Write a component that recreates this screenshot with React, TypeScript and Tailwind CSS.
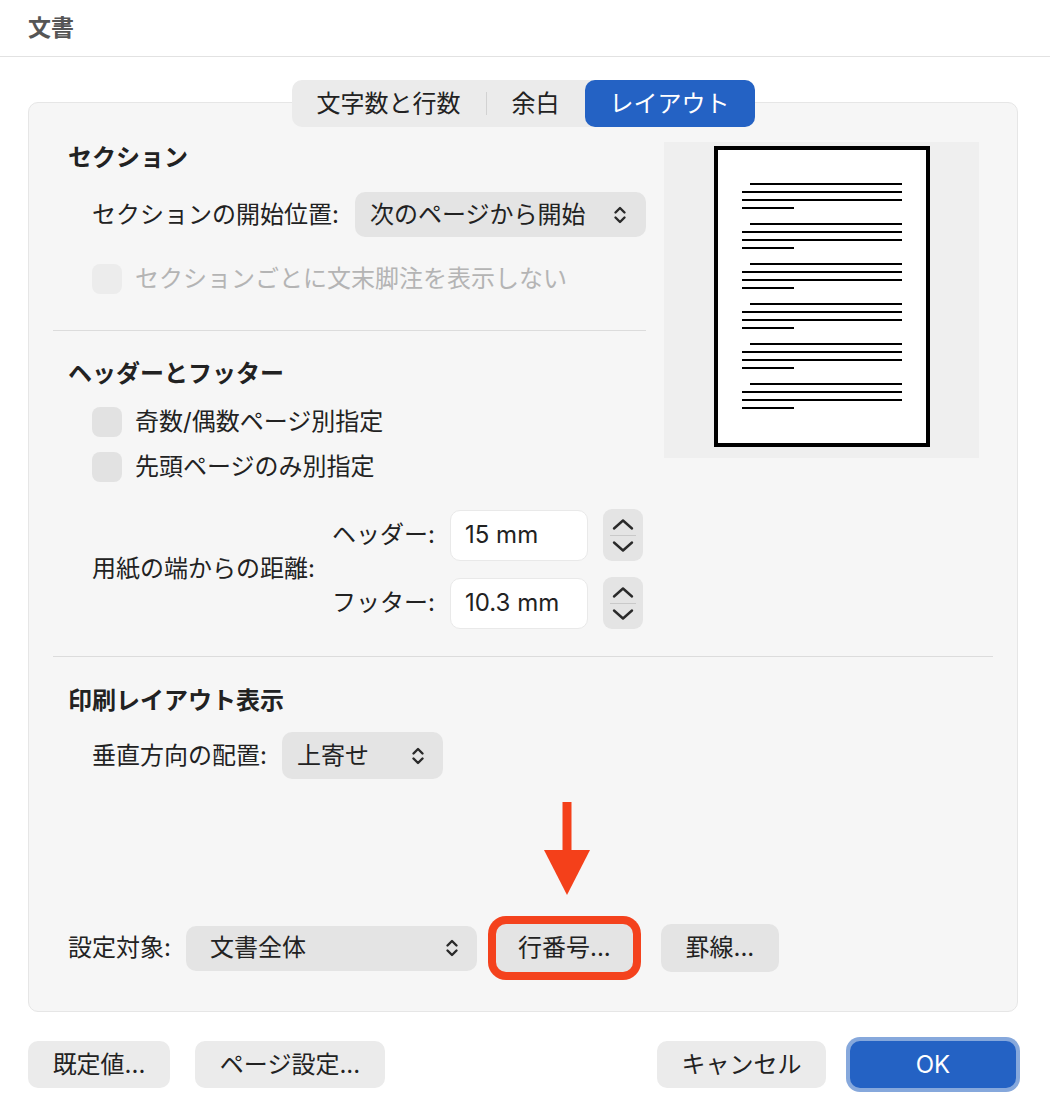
import React from 'react';

function Chevrons({ className = '' }: { className?: string }) {
  return (
    <svg width="16" height="20" viewBox="0 0 16 20" className={className} fill="none" stroke="#2a2a2a" strokeWidth="2.4" strokeLinecap="round" strokeLinejoin="round">
      <path d="M3.5 7.5 L8 3 L12.5 7.5" />
      <path d="M3.5 12.5 L8 17 L12.5 12.5" />
    </svg>
  );
}

function Stepper() {
  return (
    <div className="flex h-[52px] w-[40px] flex-col items-center justify-center rounded-[9px] bg-[#e4e4e4]">
      <svg width="24" height="13" viewBox="0 0 24 13" fill="none" stroke="#2a2a2a" strokeWidth="2.4" strokeLinecap="round" strokeLinejoin="round">
        <path d="M3 10.5 L12 2.5 L21 10.5" />
      </svg>
      <div className="my-[4px] h-px w-[26px] bg-[#c9c9c9]" />
      <svg width="24" height="13" viewBox="0 0 24 13" fill="none" stroke="#2a2a2a" strokeWidth="2.4" strokeLinecap="round" strokeLinejoin="round">
        <path d="M3 2.5 L12 10.5 L21 2.5" />
      </svg>
    </div>
  );
}

function Checkbox({ label, disabled = false }: { label: string; disabled?: boolean }) {
  return (
    <div className="flex items-center gap-[13px]">
      <div className={disabled ? 'h-[30px] w-[30px] rounded-[8px] bg-[#ececec]' : 'h-[30px] w-[30px] rounded-[8px] bg-[#e2e2e2]'} />
      <span className={disabled ? 'text-[#b4b4b4]' : ''}>{label}</span>
    </div>
  );
}

function PagePreview() {
  const groups = [0, 1, 2, 3, 4, 5];
  return (
    <div className="mr-[14px] h-[316px] w-[315px] shrink-0 bg-[#efefef]">
      <svg width="315" height="316" viewBox="0 0 315 316">
        <rect x="52" y="6" width="212" height="297" fill="#fff" stroke="#000" strokeWidth="4" />
        {groups.map((g) => {
          const y = 42 + g * 40;
          return (
            <g key={g} stroke="#000" strokeWidth="2">
              <line x1="86" y1={y} x2="238" y2={y} />
              <line x1="78" y1={y + 8} x2="238" y2={y + 8} />
              <line x1="78" y1={y + 16} x2="238" y2={y + 16} />
              <line x1="78" y1={y + 24} x2="130" y2={y + 24} />
            </g>
          );
        })}
      </svg>
    </div>
  );
}

export default function App() {
  return (
    <div className="h-[1115px] w-[1050px] overflow-hidden bg-white font-['Inter','Noto_Sans_CJK_JP',sans-serif] text-[24px] leading-[32px] text-[#222]">
      {/* title bar */}
      <div className="flex h-[57px] items-center border-b border-[#e2e2e2] pl-[28px]">
        <span className="text-[23px] font-bold leading-none text-[#555]">文書</span>
      </div>

      <div className="pl-[28px] pr-[32px] pt-[45px]">
        <div className="rounded-[10px] border border-[#e6e6e6] bg-[#f6f6f6] px-6 pb-[39px]">
          {/* tabs */}
          <div className="-mt-[23px] flex justify-center">
            <div className="flex h-[47px] items-center rounded-[10px] bg-[#ebebeb]">
              <div className="px-[25px]">文字数と行数</div>
              <div className="h-[23px] w-px bg-[#d2d2d2]" />
              <div className="px-[25px]">余白</div>
              <div className="flex h-[47px] items-center rounded-[10px] bg-[#2462c4] px-[25px] text-white">レイアウト</div>
            </div>
          </div>

          <div className="mt-[15px] flex items-start justify-between">
            <div className="w-[593px]">
              <div className="pl-[15px] font-bold">セクション</div>
              <div className="mt-[18px] flex items-center pl-[39px]">
                <span>セクションの開始位置:</span>
                <div className="ml-auto flex h-[45px] w-[291px] items-center justify-between rounded-[10px] bg-[#e4e4e4] pl-[15px] pr-[18px]">
                  <span>次のページから開始</span>
                  <Chevrons />
                </div>
              </div>
              <div className="mt-[26px] pl-[39px]">
                <Checkbox label="セクションごとに文末脚注を表示しない" disabled />
              </div>

              <div className="mt-[35px] h-px bg-[#dcdcdc]" />

              <div className="mt-[27px] pl-[15px] font-bold">ヘッダーとフッター</div>
              <div className="mt-[16px] pl-[39px]">
                <Checkbox label="奇数/偶数ページ別指定" />
              </div>
              <div className="mt-[13px] pl-[39px]">
                <Checkbox label="先頭ページのみ別指定" />
              </div>

              <div className="mt-[26px] flex items-center pl-[39px]">
                <span>用紙の端からの距離:</span>
                <div className="ml-auto mr-[3px] grid grid-cols-[auto_138px_40px] items-center gap-x-[15px] gap-y-[16px]">
                  <span className="text-right">ヘッダー:</span>
                  <div className="flex h-[51px] items-center rounded-[10px] border border-[#e9e9e9] bg-white pl-[14px]">15 mm</div>
                  <Stepper />
                  <span className="text-right">フッター:</span>
                  <div className="flex h-[51px] items-center rounded-[10px] border border-[#e9e9e9] bg-white pl-[14px]">10.3 mm</div>
                  <Stepper />
                </div>
              </div>
            </div>
            <PagePreview />
          </div>

          <div className="mt-[27px] h-px bg-[#dcdcdc]" />

          <div className="mt-[28px] pl-[15px] font-bold">印刷レイアウト表示</div>
          <div className="mt-[15px] flex items-center gap-[15px] pl-[39px]">
            <span>垂直方向の配置:</span>
            <div className="flex h-[47px] w-[161px] items-center justify-between rounded-[10px] bg-[#e4e4e4] pl-[15px] pr-[17px]">
              <span>上寄せ</span>
              <Chevrons />
            </div>
          </div>

          {/* annotation arrow */}
          <div className="mt-[23px] h-[94px] pl-[491px]">
            <svg width="46" height="94" viewBox="0 0 46 94">
              <rect x="18.5" y="0" width="9" height="52" fill="#f4401a" />
              <polygon points="0,48 46,48 23,93" fill="#f4401a" />
            </svg>
          </div>

          <div className="mt-[28px] flex items-center pl-[15px]">
            <span>設定対象:</span>
            <div className="ml-[15px] flex h-[45px] w-[291px] items-center justify-between rounded-[10px] bg-[#e4e4e4] pl-[24px] pr-[17px]">
              <span>文書全体</span>
              <Chevrons />
            </div>
            <div className="ml-[19px] flex h-[48px] w-[137px] items-center justify-center rounded-[10px] bg-[#e4e4e4] ring-8 ring-[#f4421d]">
              行番号...
            </div>
            <div className="ml-[28px] flex h-[48px] w-[118px] items-center justify-center rounded-[10px] bg-[#e4e4e4]">
              罫線...
            </div>
          </div>
        </div>
      </div>

      {/* dialog buttons */}
      <div className="mt-[29px] flex items-center px-[28px]">
        <div className="flex h-[47px] w-[142px] items-center justify-center rounded-[10px] bg-[#ebebeb]">既定値...</div>
        <div className="ml-[25px] flex h-[47px] w-[190px] items-center justify-center rounded-[10px] bg-[#ebebeb]">ページ設定...</div>
        <div className="ml-auto flex h-[47px] w-[169px] items-center justify-center rounded-[10px] bg-[#ebebeb]">キャンセル</div>
        <div className="ml-[24px] mr-[6px] flex h-[47px] w-[166px] items-center justify-center rounded-[10px] bg-[#2462c4] text-white ring-4 ring-[#86a8dc]">OK</div>
      </div>
    </div>
  );
}
